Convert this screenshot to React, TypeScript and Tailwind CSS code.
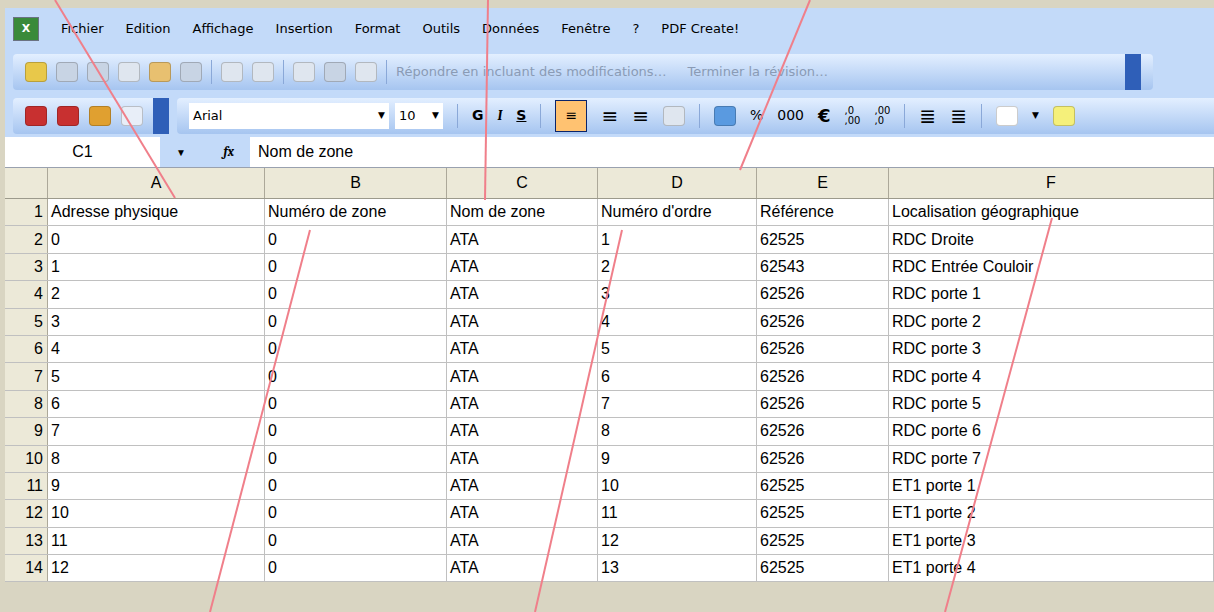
import React from "react";

const rows: string[][] = [
  ["Adresse physique", "Numéro de zone", "Nom de zone", "Numéro d'ordre", "Référence", "Localisation géographique"],
  ["0", "0", "ATA", "1", "62525", "RDC Droite"],
  ["1", "0", "ATA", "2", "62543", "RDC Entrée Couloir"],
  ["2", "0", "ATA", "3", "62526", "RDC porte 1"],
  ["3", "0", "ATA", "4", "62526", "RDC porte 2"],
  ["4", "0", "ATA", "5", "62526", "RDC porte 3"],
  ["5", "0", "ATA", "6", "62526", "RDC porte 4"],
  ["6", "0", "ATA", "7", "62526", "RDC porte 5"],
  ["7", "0", "ATA", "8", "62526", "RDC porte 6"],
  ["8", "0", "ATA", "9", "62526", "RDC porte 7"],
  ["9", "0", "ATA", "10", "62525", "ET1 porte 1"],
  ["10", "0", "ATA", "11", "62525", "ET1 porte 2"],
  ["11", "0", "ATA", "12", "62525", "ET1 porte 3"],
  ["12", "0", "ATA", "13", "62525", "ET1 porte 4"],
  ["13", "0", "ATA", "14", "62525", "ET1 porte 5"],
];
const cols = "grid-cols-[43px_217px_182px_151px_159px_132px_1fr]";

const Ic = ({ c }: { c: string }) => <div className={`w-[22px] h-[20px] rounded-sm border border-black/20 ${c}`} />;

export default function App() {
  const menus = ["Fichier", "Edition", "Affichage", "Insertion", "Format", "Outils", "Données", "Fenêtre", "?", "PDF Create!"];
  return (
    <div className="relative w-[1214px] h-[612px] bg-[#d9d5c2] overflow-hidden" style={{ fontFamily: "Tahoma, 'DejaVu Sans', sans-serif" }}>
      <div className="absolute left-[5px] top-[8px] right-0 bottom-[30px] bg-[#c3daf9] flex flex-col overflow-hidden">
        {/* menu */}
        <div className="h-[42px] shrink-0 flex items-center gap-[22px] px-2 text-[13px] text-black">
          <div className="w-[26px] h-[24px] bg-[#3a8a3a] border border-gray-500 text-white text-[11px] font-bold flex items-center justify-center">X</div>
          {menus.map((m) => <span key={m}>{m}</span>)}
        </div>
        {/* toolbar 1 */}
        <div className="h-[44px] shrink-0 flex items-center">
          <div className="ml-2 w-[1140px] h-[36px] rounded bg-gradient-to-b from-[#e3efff] to-[#a6c5f0] flex items-center gap-[9px] px-3 text-[13px] text-[#8a9bb5]">
            <Ic c="bg-[#e8c84a]" /><Ic c="bg-[#c8d4e4]" /><Ic c="bg-[#c8d4e4]" /><Ic c="bg-[#dfe6ef]" /><Ic c="bg-[#e8c070]" /><Ic c="bg-[#c8d4e4]" />
            <div className="w-px h-6 bg-[#8aa8d8]" /><Ic c="bg-[#dfe6ef]" /><Ic c="bg-[#dfe6ef]" />
            <div className="w-px h-6 bg-[#8aa8d8]" /><Ic c="bg-[#dfe6ef]" /><Ic c="bg-[#c8d4e4]" /><Ic c="bg-[#dfe6ef]" />
            <div className="w-px h-6 bg-[#8aa8d8]" />
            <span>Répondre en incluant des modifications…</span><span className="ml-3">Terminer la révision…</span>
            <div className="ml-auto w-[16px] h-[36px] bg-[#2f5fb8]" />
          </div>
        </div>
        {/* toolbar 2 */}
        <div className="h-[43px] shrink-0 flex items-center gap-2 pl-2">
          <div className="h-[36px] rounded bg-gradient-to-b from-[#e3efff] to-[#a6c5f0] flex items-center gap-[10px] pl-3 pr-0">
            <Ic c="bg-[#c83030]" /><Ic c="bg-[#c83030]" /><Ic c="bg-[#e0a030]" /><Ic c="bg-[#e8eef8]" />
            <div className="w-[16px] h-[36px] bg-[#2f5fb8]" />
          </div>
          <div className="flex-1 h-[36px] rounded-l bg-gradient-to-b from-[#e3efff] to-[#a6c5f0] flex items-center gap-[14px] pl-3 text-[14px]">
            <div className="w-[200px] h-[26px] bg-white flex items-center justify-between pl-1 text-[13px]"><span>Arial</span><span className="text-[9px] pr-1">▼</span></div>
            <div className="w-[48px] h-[26px] -ml-2 bg-white flex items-center justify-between pl-1 text-[13px]"><span>10</span><span className="text-[9px] pr-1">▼</span></div>
            <div className="w-px h-6 bg-[#8aa8d8]" />
            <b>G</b><i className="font-serif font-bold">I</i><span className="underline font-bold">S</span>
            <div className="w-px h-6 bg-[#8aa8d8]" />
            <div className="w-[32px] h-[32px] bg-[#ffc271] border border-[#0a246a] flex items-center justify-center">≡</div>
            <span className="text-xl">≡</span><span className="text-xl">≡</span><Ic c="bg-[#dfe6ef]" />
            <div className="w-px h-6 bg-[#8aa8d8]" />
            <Ic c="bg-[#5a9ae0]" /><span>%</span><span>000</span><b className="text-lg">€</b>
            <span className="text-[10px] leading-none">,0<br />,00</span><span className="text-[10px] leading-none">,00<br />,0</span>
            <div className="w-px h-6 bg-[#8aa8d8]" /><span className="text-xl">≣</span><span className="text-xl">≣</span>
            <div className="w-px h-6 bg-[#8aa8d8]" /><Ic c="bg-white" /><span className="text-[9px]">▼</span><Ic c="bg-[#f5f07a]" />
          </div>
        </div>
        {/* formula bar */}
        <div className="h-[30px] shrink-0 flex bg-white text-[16px]" style={{ fontFamily: "'Liberation Sans', Arial, sans-serif" }}>
          <div className="w-[155px] flex items-center justify-center">C1</div>
          <div className="w-[90px] bg-[#c3daf9] flex items-center justify-between px-4"><span className="text-[10px]">▼</span><i className="font-serif font-bold text-[13px]">fx</i></div>
          <div className="flex-1 flex items-center pl-2">Nom de zone</div>
        </div>
        {/* grid */}
        <div className="flex-1 bg-white border-t border-gray-400 text-[16px]" style={{ fontFamily: "'Liberation Sans', Arial, sans-serif" }}>
          <div className={`grid ${cols} h-[31px] bg-[#ece9d8] border-b border-[#9c9a8c]`}>
            {["", "A", "B", "C", "D", "E", "F"].map((h, i) => <div key={i} className="border-r border-[#aca899] flex items-center justify-center">{h}</div>)}
          </div>
          {rows.map((r, i) => (
            <div key={i} className={`grid ${cols} h-[27.4px] border-b border-[#c0c0c0]`}>
              <div className="bg-[#ece9d8] border-r border-[#aca899] flex items-center justify-end pr-1">{i + 1}</div>
              {r.map((c, j) => <div key={j} className="border-r border-[#c0c0c0] flex items-center pl-[3px] whitespace-nowrap overflow-hidden">{c}</div>)}
            </div>
          ))}
        </div>
      </div>
      <svg className="absolute inset-0 pointer-events-none" width="1214" height="612">
        <g stroke="#f07f8a" strokeWidth="2">
          <line x1="55" y1="0" x2="175" y2="198" />
          <line x1="488" y1="0" x2="485" y2="200" />
          <line x1="810" y1="0" x2="740" y2="170" />
          <line x1="310" y1="230" x2="210" y2="612" />
          <line x1="622" y1="230" x2="535" y2="612" />
          <line x1="1052" y1="218" x2="945" y2="612" />
        </g>
      </svg>
    </div>
  );
}
